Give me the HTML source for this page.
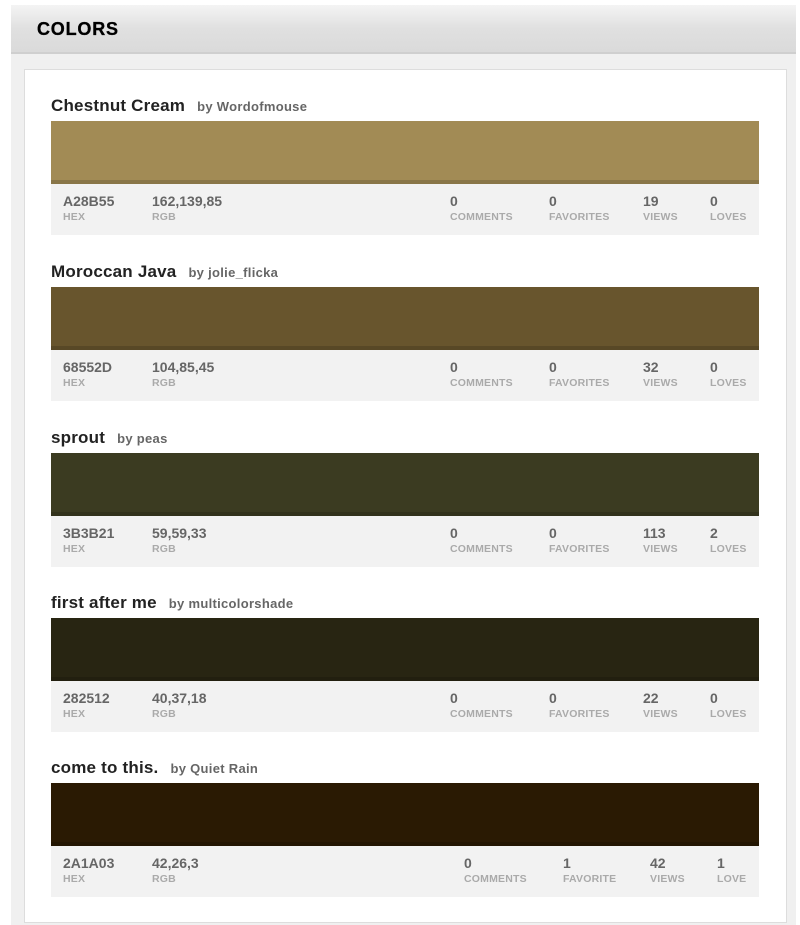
<!DOCTYPE html>
<html><head><style>
*{margin:0;padding:0;box-sizing:border-box}
body{width:800px;height:925px;background:#fff;font-family:"Liberation Sans",Arial,sans-serif;position:relative;overflow:hidden}
.outer{position:absolute;left:11px;top:5px;width:785px;height:920px;background:#f0f0f0}
.hdr{position:absolute;left:0;top:0;width:785px;height:49px;background:linear-gradient(#f4f4f4,#e0e0e0 50%,#dadada);border-bottom:2px solid #cfcfcf}
.hdr h1{position:absolute;left:26px;top:14px;font-size:18px;font-weight:900;color:#000;letter-spacing:0.8px;-webkit-text-stroke:0.3px #000}
.panel{position:absolute;background:#fff;border:1px solid #ddd}
.item{position:absolute;left:51px;width:708px}
.t{position:absolute;top:-25px;left:0;font-size:17px;font-weight:bold;color:#222;white-space:nowrap;letter-spacing:0.2px}
.t span{font-size:13px;font-weight:bold;color:#666;margin-left:12px;letter-spacing:0.3px}
.sw{position:absolute;top:0;left:0;width:708px;height:63px;border-bottom:4px solid rgba(0,0,0,.15)}
.st{position:absolute;top:63px;left:0;width:708px;height:51px;background:#f2f2f2}
.c{position:absolute;top:9px}
.c b{display:block;font-size:14px;color:#666}
.c i{display:block;font-style:normal;font-size:10.5px;font-weight:bold;color:#aaa;margin-top:2px;letter-spacing:0.2px}
</style></head><body>
<div class="outer"><div class="hdr"><h1>COLORS</h1></div></div>
<div class="panel" style="left:24px;top:69px;width:763px;height:854px"></div>

<div class="item" style="top:121px"><div class="t">Chestnut Cream<span>by Wordofmouse</span></div><div class="sw" style="background:#A28B55"></div><div class="st">
<div class="c" style="left:12px"><b>A28B55</b><i>HEX</i></div><div class="c" style="left:101px"><b>162,139,85</b><i>RGB</i></div>
<div class="c" style="left:399px"><b>0</b><i>COMMENTS</i></div><div class="c" style="left:498px"><b>0</b><i>FAVORITES</i></div><div class="c" style="left:592px"><b>19</b><i>VIEWS</i></div><div class="c" style="left:659px"><b>0</b><i>LOVES</i></div></div></div>

<div class="item" style="top:287px"><div class="t">Moroccan Java<span>by jolie_flicka</span></div><div class="sw" style="background:#68552D"></div><div class="st">
<div class="c" style="left:12px"><b>68552D</b><i>HEX</i></div><div class="c" style="left:101px"><b>104,85,45</b><i>RGB</i></div>
<div class="c" style="left:399px"><b>0</b><i>COMMENTS</i></div><div class="c" style="left:498px"><b>0</b><i>FAVORITES</i></div><div class="c" style="left:592px"><b>32</b><i>VIEWS</i></div><div class="c" style="left:659px"><b>0</b><i>LOVES</i></div></div></div>

<div class="item" style="top:453px"><div class="t">sprout<span>by peas</span></div><div class="sw" style="background:#3B3B21"></div><div class="st">
<div class="c" style="left:12px"><b>3B3B21</b><i>HEX</i></div><div class="c" style="left:101px"><b>59,59,33</b><i>RGB</i></div>
<div class="c" style="left:399px"><b>0</b><i>COMMENTS</i></div><div class="c" style="left:498px"><b>0</b><i>FAVORITES</i></div><div class="c" style="left:592px"><b>113</b><i>VIEWS</i></div><div class="c" style="left:659px"><b>2</b><i>LOVES</i></div></div></div>

<div class="item" style="top:618px"><div class="t">first after me<span>by multicolorshade</span></div><div class="sw" style="background:#282512"></div><div class="st">
<div class="c" style="left:12px"><b>282512</b><i>HEX</i></div><div class="c" style="left:101px"><b>40,37,18</b><i>RGB</i></div>
<div class="c" style="left:399px"><b>0</b><i>COMMENTS</i></div><div class="c" style="left:498px"><b>0</b><i>FAVORITES</i></div><div class="c" style="left:592px"><b>22</b><i>VIEWS</i></div><div class="c" style="left:659px"><b>0</b><i>LOVES</i></div></div></div>

<div class="item" style="top:783px"><div class="t">come to this.<span>by Quiet Rain</span></div><div class="sw" style="background:#2A1A03"></div><div class="st">
<div class="c" style="left:12px"><b>2A1A03</b><i>HEX</i></div><div class="c" style="left:101px"><b>42,26,3</b><i>RGB</i></div>
<div class="c" style="left:413px"><b>0</b><i>COMMENTS</i></div><div class="c" style="left:512px"><b>1</b><i>FAVORITE</i></div><div class="c" style="left:599px"><b>42</b><i>VIEWS</i></div><div class="c" style="left:666px"><b>1</b><i>LOVE</i></div></div></div>
</body></html>
